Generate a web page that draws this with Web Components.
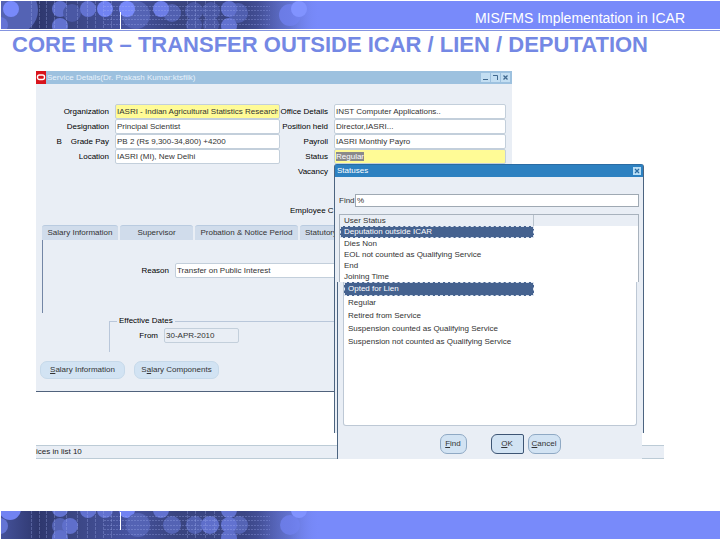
<!DOCTYPE html>
<html lang="en">
<head>
<meta charset="utf-8">
<meta name="viewport" content="width=device-width, initial-scale=1">
<title>MIS/FMS Implementation in ICAR</title>
<style>
  body {
    margin: 0;
    background: #fff;
    font-family: "Liberation Sans", Arial, sans-serif;
  }
</style>
</head>
<body>
<hr-slide></hr-slide>

<script>
// dotted tech pattern used at the left end of both bars
const dots = {
  top: [
    [14, 9, 24, "#5463b4"], [0, 24, 8, "#6474d4"], [11, 8, 8, "#788afa"],
    [60, 8, 8, "#5f6fcb"], [60, 25, 8, "#6272d0"], [72, 12, 9, "#4a58a4"],
    [88, 8, 8, "#6272d0"], [136, 14, 14, "#5463b4"], [105, 8, 8, "#7183f2"],
    [127, 8, 8, "#788afa"], [172, 12, 9, "#5160b0"], [161, 8, 8, "#6c7de6"],
    [194, 10, 9, "#4a58a4"], [194, 24, 8, "#4a58a4"], [211, 10, 9, "#4a58a4"],
    [211, 24, 8, "#4a58a4"], [238, 12, 10, "#4f5eae"], [229, 8, 8, "#5f6fcb"],
    [229, 25, 8, "#6272d0"], [290, 14, 11, "#6575dc"]
  ],
  bottom: [
    [10, -2, 11, "#7183f2"], [0, 15, 8, "#6474d4"], [60, -2, 8, "#6272d0"],
    [60, 15, 8, "#5463b4"], [70, 15, 8, "#5f6fcb"], [60, 27, 8, "#5f6fcb"],
    [88, -1, 8, "#6272d0"], [105, -1, 8, "#6272d0"], [127, -1, 8, "#7183f2"],
    [138, 14, 12, "#5463b4"], [161, -1, 8, "#6272d0"], [172, 14, 9, "#5463b4"],
    [195, 14, 9, "#5160b0"], [210, 14, 9, "#5f6fcb"], [229, -1, 8, "#6272d0"],
    [239, 14, 9, "#5463b4"], [229, 14, 8, "#6272d0"], [229, 27, 8, "#5f6fcb"],
    [290, 14, 10, "#6575dc"]
  ]
};

class SlideBar extends HTMLElement {
  connectedCallback() {
    const edge = this.getAttribute("edge");
    const circles = dots[edge]
      .map(([x, y, r, fill]) => `<circle cx="${x}" cy="${y}" r="${r}" fill="${fill}"/>`)
      .join("");
    const columns = [31, 39, 46, 54, 66, 77, 87, 95, 103, 111, 187, 195, 205, 214]
      .map((x) => `<path d="M${x}.5 0V28"/>`)
      .join("");
    const rows = [5, 9, 14, 18, 23]
      .map((y) => `<path d="M104 ${y}.5H270"/>`)
      .join("");
    const tick = edge === "top" ? "M120.5 11V28" : "M120.5 1V19";

    this.attachShadow({ mode: "open" }).innerHTML = `
      <style>
        :host {
          display: flex;
          align-items: center;
          height: 28px;
          margin-left: 1px;
          background: #788afa;
          color: #fff;
          font-size: 14px;
        }
        svg { flex: none; width: 320px; height: 28px; }
        .text { flex: 1; padding: 6px 35px 0 0; text-align: right; white-space: nowrap; }
      </style>
      <svg viewBox="1 0 320 28" aria-hidden="true">
        <defs>
          <linearGradient id="base">
            <stop offset="0" stop-color="#46539c"/>
            <stop offset=".12" stop-color="#2e376e"/>
            <stop offset=".2" stop-color="#39447f"/>
            <stop offset=".4" stop-color="#4653a0"/>
            <stop offset=".55" stop-color="#39447f"/>
            <stop offset=".8" stop-color="#3b4687"/>
            <stop offset=".9" stop-color="#5463b4"/>
            <stop offset="1" stop-color="#788afa"/>
          </linearGradient>
          <linearGradient id="fade">
            <stop offset=".76" stop-color="#788afa" stop-opacity="0"/>
            <stop offset=".9" stop-color="#788afa" stop-opacity=".4"/>
            <stop offset=".99" stop-color="#788afa"/>
          </linearGradient>
        </defs>
        <rect width="322" height="28" fill="url(#base)"/>
        ${circles}
        <g stroke="#a9b5f5" stroke-opacity=".3" stroke-dasharray="3 1">${columns}</g>
        <g stroke="#a9b5f5" stroke-opacity=".3" stroke-dasharray="2 1">${rows}</g>
        <rect width="322" height="28" fill="url(#fade)"/>
        <circle cx="299" cy="${edge === "top" ? 8 : -1}" r="8" fill="#8193ff"/>
        <path d="${tick}" stroke="#fff"/>
      </svg>
      <div class="text"><slot></slot></div>`;
  }
}

class FormField extends HTMLElement {
  connectedCallback() {
    const label = this.getAttribute("label");
    const value = this.getAttribute("value") || "";
    this.attachShadow({ mode: "open" }).innerHTML = `
      <style>
        :host { display: flex; align-items: center; gap: 6px; min-width: 0; }
        label {
          flex: none;
          width: var(--label-width, 73px);
          text-align: right;
          white-space: pre;
          color: #000;
        }
        input {
          box-sizing: border-box;
          flex: 1;
          min-width: 0;
          width: 0;
          height: 15px;
          padding: 0 1px;
          border: 1px solid #c3cfdb;
          border-radius: 2px;
          background: #fff;
          color: #333;
          font: inherit;
          outline: 0;
        }
        input::selection { background: #8a8a8a; color: #fff; }
        :host([required]) input { background: #fffb96; }
        :host([muted]) input { background: #e9eef5; }
        :host([bare]) input { visibility: hidden; }
      </style>
      <label for="field">${label}</label>
      <input id="field" type="text" value="${value}">`;
    if (this.hasAttribute("selected")) {
      const input = this.shadowRoot.querySelector("input");
      input.focus();
      input.select();
    }
  }
}

class PushButton extends HTMLElement {
  connectedCallback() {
    this.attachShadow({ mode: "open" }).innerHTML = `
      <style>
        :host { display: block; }
        button {
          box-sizing: border-box;
          width: 100%;
          height: var(--button-height, 18px);
          padding: 0;
          border: 1px solid #c6d9ea;
          border-radius: 7px;
          background: #d2e3f3;
          color: #333;
          font: inherit;
          white-space: nowrap;
        }
        :host([outlined]) button { border-color: #8fa9c4; }
        :host([default]) button { border-color: #3d5574; border-radius: 6px 2px 2px 6px; }
      </style>
      <button type="button"><slot></slot></button>`;
  }
}

class ServiceWindow extends HTMLElement {
  connectedCallback() {
    this.attachShadow({ mode: "open" }).innerHTML = `
      <style>
        :host {
          display: block;
          background: #e9eef5;
          border-bottom: 1px solid #50627c;
          font-size: 8px;
          line-height: 10px;
        }
        header {
          display: flex;
          align-items: center;
          gap: 1px;
          height: 13px;
          background: #9dc1df;
          color: #e8f2fb;
        }
        .logo { width: 10px; height: 13px; }
        h2 { flex: 1; margin: 0; font-size: 8px; font-weight: normal; white-space: nowrap; }
        header button {
          width: 9px;
          height: 9px;
          padding: 0;
          border: 0;
          background: #c3def2;
          line-height: 0;
        }
        header button:last-child { margin-right: 2px; }
        header nav { display: flex; gap: 1px; }
        header svg { display: block; }
        .details {
          display: grid;
          grid-template-columns: 244fr 226fr;
          padding: 20px 6px 0 0;
        }
        .right { --label-width: 48px; }
        .employee { margin: 27px 0 9px 254px; white-space: nowrap; }
        .tabs { display: flex; gap: 2px; padding-left: 6px; overflow: hidden; }
        .tabs button {
          flex: none;
          height: 15px;
          padding: 0;
          border: 0;
          border-top: 1px solid #b9cbe0;
          border-radius: 3px 3px 0 0;
          background: #d0dceb;
          color: #333;
          font: inherit;
        }
        .panel {
          margin-left: 6px;
          border-left: 1px solid #7386a5;
          padding: 23px 6px 35px 0;
          --label-width: 126px;
        }
        fieldset {
          display: flex;
          margin: 3px 6px 0 73px;
          padding: 2px 0 9px;
          border: 1px solid #b9c7da;
          border-width: 1px 0 0 1px;
          --label-width: 48px;
        }
        legend { margin-left: 7px; padding: 0 2px; color: #000; }
        fieldset form-field { width: 129px; }
        .actions { display: flex; gap: 9px; padding: 9px 4px 12px; }
        .actions push-button { width: 85px; }
      </style>
      <header>
        <svg class="logo" viewBox="0 0 10 13" aria-hidden="true">
          <rect width="10" height="13" fill="#d8141c"/>
          <rect x="1.5" y="4" width="7" height="4.5" rx="2" fill="none" stroke="#fff" stroke-width="1.4"/>
        </svg>
        <h2>Service Details(Dr. Prakash Kumar:ktsfilk)</h2>
        <nav>
          <button type="button" aria-label="Minimize"><svg viewBox="0 0 9 9"><path d="M2 6.5h5" stroke="#41698f"/></svg></button>
          <button type="button" aria-label="Restore"><svg viewBox="0 0 9 9"><path d="M2 2.5h4.5V7" fill="none" stroke="#41698f"/></svg></button>
          <button type="button" aria-label="Close"><svg viewBox="0 0 9 9"><path d="M2.5 2.5l4 4m0-4l-4 4" stroke="#41698f" stroke-width="1.3"/></svg></button>
        </nav>
      </header>
      <div class="details">
        <div class="left">
          <form-field required label="Organization" value="IASRI - Indian Agricultural Statistics Research"></form-field>
          <form-field label="Designation" value="Principal Scientist"></form-field>
          <form-field label="B    Grade Pay" value="PB 2 (Rs 9,300-34,800) +4200"></form-field>
          <form-field label="Location" value="IASRI (MI), New Delhi"></form-field>
        </div>
        <div class="right">
          <form-field label="Office Details" value="INST Computer Applications.."></form-field>
          <form-field label="Position held" value="Director,IASRI..."></form-field>
          <form-field label="Payroll" value="IASRI Monthly Payro"></form-field>
          <form-field required selected label="Status" value="Regular"></form-field>
          <form-field bare label="Vacancy"></form-field>
        </div>
      </div>
      <div class="employee">Employee C</div>
      <div class="tabs">
        <button type="button" style="width:76px">Salary Information</button>
        <button type="button" style="width:73px">Supervisor</button>
        <button type="button" style="width:103px">Probation &amp; Notice Period</button>
        <button type="button" style="width:42px">Statutory</button>
      </div>
      <div class="panel">
        <form-field label="Reason" value="Transfer on Public Interest"></form-field>
      </div>
      <fieldset>
        <legend>Effective Dates</legend>
        <form-field muted label="From" value="30-APR-2010"></form-field>
      </fieldset>
      <div class="actions">
        <push-button><u>S</u>alary Information</push-button>
        <push-button>S<u>a</u>lary Components</push-button>
      </div>`;
  }
}

class StatusDialog extends HTMLElement {
  connectedCallback() {
    this.attachShadow({ mode: "open" }).innerHTML = `
      <style>
        :host { display: block; position: relative; font-size: 8px; line-height: 10px; color: #333; }
        /* outer frame stops above the button row */
        .upper {
          position: absolute;
          inset: 0 0 27px;
          box-sizing: border-box;
          border: 1px solid #4c6480;
          border-top-color: #2b6ca3;
          border-bottom: 0;
          border-radius: 3px 3px 0 0;
          background: #e9eef5;
        }
        .content { position: relative; padding: 1px; }
        header {
          display: flex;
          align-items: center;
          height: 12px;
          padding: 0 2px;
          background: #2d81c1;
          color: #fff;
        }
        h2 { flex: 1; margin: 0; font-size: 8px; font-weight: normal; }
        header button { width: 8px; height: 8px; padding: 0; border: 0; background: #b9def5; line-height: 0; }
        header svg { display: block; }
        .find { display: flex; align-items: center; padding: 17px 4px 7px; }
        .find label { width: 16px; }
        .find input {
          box-sizing: border-box;
          flex: 1;
          min-width: 0;
          height: 13px;
          padding: 0 1px;
          border: 1px solid #9fa9b3;
          background: #fff;
          color: #333;
          font: inherit;
        }
        .list {
          margin: 0 4px;
          border: 1px solid #a8b2bd;
          border-bottom: 0;
          background: #fff;
        }
        table { width: 100%; border-collapse: collapse; table-layout: fixed; }
        th, td { padding: 0 4px; font-weight: normal; text-align: left; white-space: nowrap; }
        col.status { width: 65%; }
        th { height: 11px; background: #e9eef5; }
        th + th { border-left: 1px solid #b9c3cd; }
        .list td { height: 11px; }
        .list .selected td { height: 12px; }
        .selected td:first-child {
          background: #45628f;
          color: #fff;
          outline: 1px dashed #dfe6f0;
          outline-offset: -1px;
        }
        .lower {
          margin: 0 1px 0 2px;
          padding: 0 5px 5px;
          border-left: 1px solid #4c6480;
          background: #e9eef5;
        }
        .more {
          box-sizing: border-box;
          min-height: 144px;
          border: 1px solid #bdc8d5;
          border-top: 0;
          border-radius: 0 0 3px 3px;
          background: #fff;
        }
        .more td { height: 13px; }
        .more .selected td { height: 14px; }
        .buttons {
          display: flex;
          justify-content: center;
          gap: 4px;
          padding: 8px 0 0 20px;
          --button-height: 20px;
        }
        .buttons push-button { width: 33px; }
        .buttons push-button:first-child { width: 27px; margin-right: 20px; }
      </style>
      <div class="upper"></div>
      <div class="content">
        <header>
          <h2>Statuses</h2>
          <button type="button" aria-label="Close"><svg viewBox="0 0 8 8"><path d="M2 2l4 4m0-4L2 6" stroke="#2b6ca3" stroke-width="1.3"/></svg></button>
        </header>
        <div class="find">
          <label for="find">Find</label>
          <input id="find" type="text" value="%">
        </div>
        <div class="list">
          <table>
            <colgroup><col class="status"><col></colgroup>
            <thead><tr><th>User Status</th><th></th></tr></thead>
            <tbody>
              <tr class="selected"><td>Deputation outside ICAR</td><td></td></tr>
              <tr><td>Dies Non</td><td></td></tr>
              <tr><td>EOL not counted as Qualifying Service</td><td></td></tr>
              <tr><td>End</td><td></td></tr>
              <tr><td>Joining Time</td><td></td></tr>
            </tbody>
          </table>
        </div>
        <div class="lower">
          <div class="more">
            <table>
              <colgroup><col class="status"><col></colgroup>
              <tbody>
                <tr class="selected"><td>Opted for Lien</td><td></td></tr>
                <tr><td>Regular</td><td></td></tr>
                <tr><td>Retired from Service</td><td></td></tr>
                <tr><td>Suspension counted as Qualifying Service</td><td></td></tr>
                <tr><td>Suspension not counted as Qualifying Service</td><td></td></tr>
              </tbody>
            </table>
          </div>
          <div class="buttons">
            <push-button outlined><u>F</u>ind</push-button>
            <push-button default><u>O</u>K</push-button>
            <push-button outlined><u>C</u>ancel</push-button>
          </div>
        </div>
      </div>`;
  }
}

class HrSlide extends HTMLElement {
  connectedCallback() {
    this.attachShadow({ mode: "open" }).innerHTML = `
      <style>
        :host {
          box-sizing: border-box;
          display: flex;
          flex-direction: column;
          min-height: 100vh;
          padding: 1px 0;
        }
        .rule { height: 1px; margin-top: 1px; background: #8494e0; }
        h1 {
          margin: 0;
          padding: 0 12px;
          color: #7488e4;
          font-size: 22px;
          line-height: 28px;
          white-space: nowrap;
        }
        .desktop { position: relative; margin: 12px 56px 0 36px; }
        service-window { margin-right: 152px; }
        status-dialog { position: absolute; left: 298px; right: 20px; top: 93px; }
        .status {
          margin-top: 53px;
          border: 1px solid #bccbd6;
          border-width: 1px 0;
          background: #e9eef5;
          color: #222;
          font-size: 8px;
          line-height: 12px;
        }
        slide-bar[edge="bottom"] { margin-top: auto; }
      </style>
      <slide-bar edge="top">MIS/FMS Implementation in ICAR</slide-bar>
      <div class="rule"></div>
      <h1>CORE HR – TRANSFER OUTSIDE ICAR / LIEN / DEPUTATION</h1>
      <main class="desktop">
        <service-window></service-window>
        <div class="status">ices in list 10</div>
        <status-dialog></status-dialog>
      </main>
      <slide-bar edge="bottom"></slide-bar>`;
  }
}

customElements.define("slide-bar", SlideBar);
customElements.define("form-field", FormField);
customElements.define("push-button", PushButton);
customElements.define("service-window", ServiceWindow);
customElements.define("status-dialog", StatusDialog);
customElements.define("hr-slide", HrSlide);
</script>
</body>
</html>
